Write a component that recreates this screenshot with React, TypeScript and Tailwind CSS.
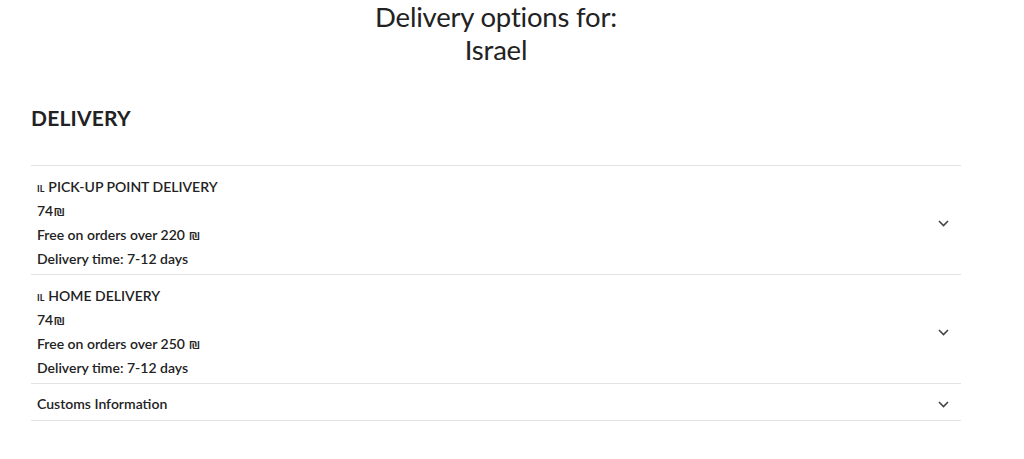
import React from "react";

const Chevron = () => (
  <svg width="11" height="7" viewBox="0 0 11 7" fill="none" className="shrink-0">
    <path d="M1 1l4.5 4.5L10 1" stroke="#444" strokeWidth="1.6" />
  </svg>
);

const Line = ({ children }: { children: React.ReactNode }) => (
  <div className="h-[24px] leading-[24px] overflow-visible whitespace-nowrap">{children}</div>
);

const Row = ({ title, price, free }: { title: string; price: string; free: string }) => (
  <div className="flex items-center border-b border-[#e3e3e3] pl-[6px] pr-[12px] pt-[9px] pb-[3px]">
    <div className="flex-1 flex flex-col text-[14px] font-semibold text-[#222]">
      <Line>
        <span className="text-[9px] font-bold mr-[4px]">IL</span>
        <span>{title}</span>
      </Line>
      <Line>{price}</Line>
      <Line>{free}</Line>
      <Line>Delivery time: 7-12 days</Line>
    </div>
    <Chevron />
  </div>
);

export default function App() {
  return (
    <div className="bg-white min-h-[459px] w-[1024px] text-[#222]" style={{ fontFamily: "Lato, 'Open Sans', sans-serif" }}>
      <div className="text-center text-[27.5px] leading-[33px] font-normal pr-[32px] tracking-[-0.2px]">
        <div>Delivery options for:</div>
        <div>Israel</div>
      </div>
      <div className="pl-[31px] pr-[63px]">
        <h2 className="mt-[38px] text-[21px] font-bold leading-[28px] tracking-[0.2px]">DELIVERY</h2>
        <div className="mt-[33px] border-t border-[#e3e3e3]">
          <Row title="PICK-UP POINT DELIVERY" price="74₪" free="Free on orders over 220 ₪" />
          <Row title="HOME DELIVERY" price="74₪" free="Free on orders over 250 ₪" />
          <div className="flex items-center border-b border-[#e3e3e3] pl-[6px] pr-[12px] pt-[8px] pb-[4px]">
            <div className="flex-1 text-[14px] font-semibold h-[24px] leading-[24px]">Customs Information</div>
            <Chevron />
          </div>
        </div>
      </div>
    </div>
  );
}
